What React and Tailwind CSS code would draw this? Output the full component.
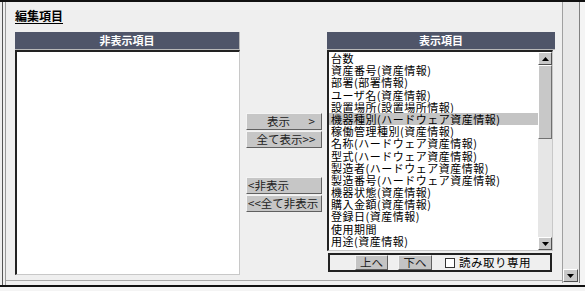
import React from "react";

const items = [
  "台数",
  "資産番号(資産情報)",
  "部署(部署情報)",
  "ユーザ名(資産情報)",
  "設置場所(設置場所情報)",
  "機器種別(ハードウェア資産情報)",
  "稼働管理種別(資産情報)",
  "名称(ハードウェア資産情報)",
  "型式(ハードウェア資産情報)",
  "製造者(ハードウェア資産情報)",
  "製造番号(ハードウェア資産情報)",
  "機器状態(資産情報)",
  "購入金額(資産情報)",
  "登録日(資産情報)",
  "使用期間",
  "用途(資産情報)",
];

function Tri({ up }) {
  return (
    <svg width="7" height="4" viewBox="0 0 7 4">
      {up ? <polygon points="0,4 7,4 3.5,0" fill="#000" /> : <polygon points="0,0 7,0 3.5,4" fill="#000" />}
    </svg>
  );
}

function ArrowBox({ up, cls }) {
  return (
    <div
      className={
        "flex items-center justify-center bg-[#c8c8c8] border border-t-white border-l-white border-r-[#505050] border-b-[#505050] " +
        cls
      }
    >
      <Tri up={up} />
    </div>
  );
}

function Btn({ children, cls }) {
  return (
    <div
      className={
        "h-[17px] flex items-center bg-[#c6c6c6] border border-t-[#f4f4f4] border-l-[#f4f4f4] border-r-[#606060] border-b-[#606060] text-[11.5px] leading-none text-[#222] " +
        cls
      }
    >
      {children}
    </div>
  );
}

export default function App() {
  return (
    <div className="w-[585px] h-[291px] bg-[#efefef] flex flex-col overflow-hidden font-['Noto_Sans_CJK_JP',sans-serif] text-black">
      <div className="h-[2px] bg-[#111]" />
      <div className="flex h-[283px]">
        <div className="w-[2px] bg-[#efefef]" />
        <div className="w-[1px] bg-[#555]" />
        <div className="w-[2px] bg-[#efefef]" />
        <div className="w-[1px] bg-[#9a9a9a]" />
        {/* main panel */}
        <div className="w-[556px] h-[279px] border-b border-[#a8a8a8] pl-[9px] flex flex-col">
          <div className="mt-[6px] h-[16px] leading-[16px] text-[12px] font-bold underline underline-offset-[2px] w-fit">
            編集項目
          </div>
          <div className="mt-[8px] flex">
            {/* left panel */}
            <div className="w-[225px] flex flex-col">
              <div className="h-[18px] bg-[#4f5569] border-b border-r border-[#b8b8b8] text-white text-[11px] font-bold flex items-center justify-center">
                非表示項目
              </div>
              <div className="h-[225px] bg-white border-t-2 border-l-2 border-t-[#222] border-l-[#222] border-r border-b border-r-[#c8c8c8] border-b-[#c8c8c8]" />
            </div>
            {/* buttons */}
            <div className="w-[76px] ml-[6px] pt-[81px] flex flex-col">
              <Btn cls="justify-between pl-[20px] pr-[6px]">
                <span>表示</span>
                <span>&gt;</span>
              </Btn>
              <Btn cls="mt-[1px] justify-center pl-[4px]">全て表示&gt;&gt;</Btn>
              <Btn cls="mt-[29px] pl-[1px]">&lt;非表示</Btn>
              <Btn cls="mt-[1px] pl-[1px]">&lt;&lt;全て非表示</Btn>
            </div>
            {/* right panel */}
            <div className="w-[228px] ml-[5px] flex flex-col">
              <div className="h-[18px] bg-[#4f5569] border-b border-[#b8b8b8] text-white text-[11px] font-bold flex items-center justify-center">
                表示項目
              </div>
              <div className="w-[226px] h-[201px] bg-white border-t-2 border-l-2 border-t-[#222] border-l-[#222] border-r border-b border-r-[#c8c8c8] border-b-[#c8c8c8] flex">
                <div className="flex-1 flex flex-col">
                  {items.map((t, i) => (
                    <div
                      key={i}
                      className={
                        "h-[12.2px] leading-[12.2px] text-[11px] pl-[2px] whitespace-nowrap tracking-[0.5px] " +
                        (i === 5 ? "bg-[#c4c4c4]" : "")
                      }
                    >
                      {t}
                    </div>
                  ))}
                </div>
                <div className="w-[14px] flex flex-col bg-[#e6e6e6]">
                  <ArrowBox up cls="h-[13px]" />
                  <div className="h-[74px] bg-[#c8c8c8] border border-t-white border-l-white border-r-[#707070] border-b-[#707070]" />
                  <div className="flex-1" />
                  <ArrowBox cls="h-[13px]" />
                </div>
              </div>
              <div className="mt-[2px] ml-[1px] w-[224px] h-[19px] border-2 border-[#222] bg-[#efefef] flex items-center pl-[25px]">
                <div className="w-[33px] h-[15px] bg-[#c4c4c4] border border-t-[#f4f4f4] border-l-[#f4f4f4] border-r-[#606060] border-b-[#606060] text-[11.5px] leading-none text-[#222] flex items-center justify-center">
                  上へ
                </div>
                <div className="ml-[10px] w-[34px] h-[15px] bg-[#c4c4c4] border border-t-[#f4f4f4] border-l-[#f4f4f4] border-r-[#606060] border-b-[#606060] text-[11.5px] leading-none text-[#222] flex items-center justify-center">
                  下へ
                </div>
                <div className="ml-[13px] w-[10px] h-[10px] bg-white border border-[#333]" />
                <div className="ml-[4px] text-[11.5px] leading-none tracking-[0.5px]">読み取り専用</div>
              </div>
            </div>
          </div>
        </div>
        {/* page scrollbar */}
        <div className="w-[18px] h-[281px] border-l border-[#a0a0a0] border-r border-r-[#808080] bg-[#e8e8e8] flex flex-col justify-end pb-[1px]">
          <ArrowBox cls="w-[15px] h-[13px]" />
        </div>
        <div className="flex-1 bg-[#f4f4f4]" />
      </div>
      <div className="h-[2px] bg-[#111]" />
      <div className="flex-1 bg-[#f4f4f4]" />
    </div>
  );
}
